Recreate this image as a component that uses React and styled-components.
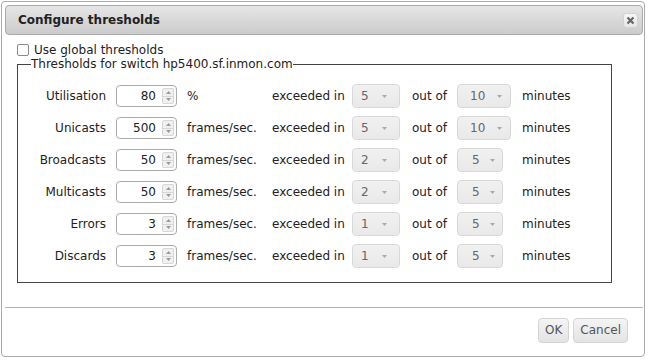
import React from 'react';
import styled, { createGlobalStyle } from 'styled-components';

const Global = createGlobalStyle`
  html, body { margin: 0; padding: 0; background: #fff; }
  body { font-family: "DejaVu Sans", Verdana, sans-serif; font-size: 12px; color: #222; }
  * { box-sizing: border-box; }
`;

const Dialog = styled.div`
  margin: 1px 0 0 1px;
  width: 644px;
  height: 356px;
  border: 1px solid #aaa;
  border-radius: 4px;
  padding: 3px 1px 3px 3px;
  display: flex;
  flex-direction: column;
  background: #fff;
`;

const TitleBar = styled.div`
  height: 30px;
  border: 1px solid #aaa;
  border-radius: 4px;
  background: linear-gradient(#e6e6e6, #cbcbcb);
  display: flex;
  align-items: center;
  justify-content: space-between;
  padding: 0 4px 0 12px;
`;

const Title = styled.span`
  font-weight: bold;
  font-size: 12px;
  color: #222;
`;

const CloseButton = styled.span`
  width: 15px;
  height: 15px;
  border: 1px solid #d3d3d3;
  border-radius: 3px;
  background: linear-gradient(#f6f6f6, #e6e6e6);
  display: flex;
  align-items: center;
  justify-content: center;
`;

const Content = styled.div`
  flex: 1;
  padding: 8px 0 0 12px;
  display: flex;
  flex-direction: column;
`;

const CheckRow = styled.label`
  display: flex;
  align-items: center;
  height: 14px;
  gap: 5px;
  line-height: 14px;
`;

const CheckBox = styled.span`
  width: 12px;
  height: 12px;
  border: 1px solid #8a8a8a;
  border-radius: 2px;
  background: #fff;
`;

const FieldSet = styled.fieldset`
  margin: 0;
  width: 595px;
  border: 1px solid #444;
  padding: 9px 0 10px 13px;
`;

const Legend = styled.legend`
  padding: 0;
  line-height: 14px;
  font-size: 12px;
`;

const Grid = styled.div`
  display: grid;
  grid-template-columns: 75px 61px 75px 70px 50px 35px 55px auto;
  grid-auto-rows: 32px;
  column-gap: 10px;
  align-items: center;
`;

const Label = styled.span`
  text-align: right;
  white-space: nowrap;
`;

const Text = styled.span`
  white-space: nowrap;
`;

const Spinner = styled.span`
  width: 61px;
  height: 22px;
  border: 1px solid #aaa;
  border-radius: 4px;
  background: #fff;
  display: flex;
  align-items: stretch;
`;

const SpinValue = styled.span`
  flex: 1;
  text-align: right;
  padding-right: 6px;
  line-height: 20px;
`;

const SpinButtons = styled.span`
  width: 12px;
  margin: 2px 2px 2px 0;
  display: flex;
  flex-direction: column;
  border: 1px solid #d6d6d6;
  border-radius: 2px;
  background: #f1f1f1;
`;

const SpinHalf = styled.span`
  flex: 1;
  display: flex;
  align-items: center;
  justify-content: center;
  border-top: ${p => (p.$down ? '1px solid #d6d6d6' : 'none')};
`;

const SelectBox = styled.span`
  width: ${p => p.$w}px;
  height: 24px;
  border: 1px solid #d8d8d8;
  border-radius: 4px;
  background: linear-gradient(#f1f1f1, #e9e9e9);
  color: #666;
  display: flex;
  align-items: center;
  gap: ${p => p.$gap}px;
  padding-left: ${p => p.$pad}px;
  line-height: 22px;
`;

const ButtonPane = styled.div`
  border-top: 1px solid #b4b4b4;
  padding: 10px 15px 10px 0;
  display: flex;
  justify-content: flex-end;
  gap: 4px;
`;

const Button = styled.button`
  height: 25px;
  padding: 0 6px;
  border: 1px solid #d3d3d3;
  border-radius: 4px;
  background: linear-gradient(#f4f4f4, #e4e4e4);
  color: #555;
  font-family: "DejaVu Sans", Verdana, sans-serif;
  font-size: 12px;
  line-height: 23px;
`;

const Tri = ({ up, color = '#999' }) => (
  <svg width="5" height="3" viewBox="0 0 5 3">
    <path d={up ? 'M0 3 L2.5 0 L5 3 Z' : 'M0 0 L5 0 L2.5 3 Z'} fill={color} />
  </svg>
);

const Select = ({ value, w, pad, gap }) => (
  <div>
    <SelectBox $w={w} $pad={pad} $gap={gap}>
      <span>{value}</span>
      <Tri color="#aaa" />
    </SelectBox>
  </div>
);

const rows = [
  { label: 'Utilisation', value: '80', unit: '%', a: '5', b: '10' },
  { label: 'Unicasts', value: '500', unit: 'frames/sec.', a: '5', b: '10' },
  { label: 'Broadcasts', value: '50', unit: 'frames/sec.', a: '2', b: '5' },
  { label: 'Multicasts', value: '50', unit: 'frames/sec.', a: '2', b: '5' },
  { label: 'Errors', value: '3', unit: 'frames/sec.', a: '1', b: '5' },
  { label: 'Discards', value: '3', unit: 'frames/sec.', a: '1', b: '5' },
];

export default function App() {
  return (
    <>
      <Global />
      <Dialog>
        <TitleBar>
          <Title>Configure thresholds</Title>
          <CloseButton>
            <svg width="9" height="9" viewBox="0 0 9 9">
              <path d="M1.5 1.5 L7.5 7.5 M7.5 1.5 L1.5 7.5" stroke="#666" strokeWidth="2.2" />
            </svg>
          </CloseButton>
        </TitleBar>
        <Content>
          <CheckRow>
            <CheckBox />
            <span>Use global thresholds</span>
          </CheckRow>
          <FieldSet>
            <Legend>Thresholds for switch hp5400.sf.inmon.com</Legend>
            <Grid>
              {rows.map(r => (
                <React.Fragment key={r.label}>
                  <Label>{r.label}</Label>
                  <Spinner>
                    <SpinValue>{r.value}</SpinValue>
                    <SpinButtons>
                      <SpinHalf><Tri up color="#9a9a9a" /></SpinHalf>
                      <SpinHalf $down><Tri color="#9a9a9a" /></SpinHalf>
                    </SpinButtons>
                  </Spinner>
                  <Text>{r.unit}</Text>
                  <Text>exceeded in</Text>
                  <Select value={r.a} w={48} pad={8} gap={13} />
                  <Text>out of</Text>
                  {r.b === '10' ? (
                    <Select value={r.b} w={54} pad={12} gap={12} />
                  ) : (
                    <Select value={r.b} w={46} pad={14} gap={10} />
                  )}
                  <Text>minutes</Text>
                </React.Fragment>
              ))}
            </Grid>
          </FieldSet>
        </Content>
        <ButtonPane>
          <Button>OK</Button>
          <Button>Cancel</Button>
        </ButtonPane>
      </Dialog>
    </>
  );
}
